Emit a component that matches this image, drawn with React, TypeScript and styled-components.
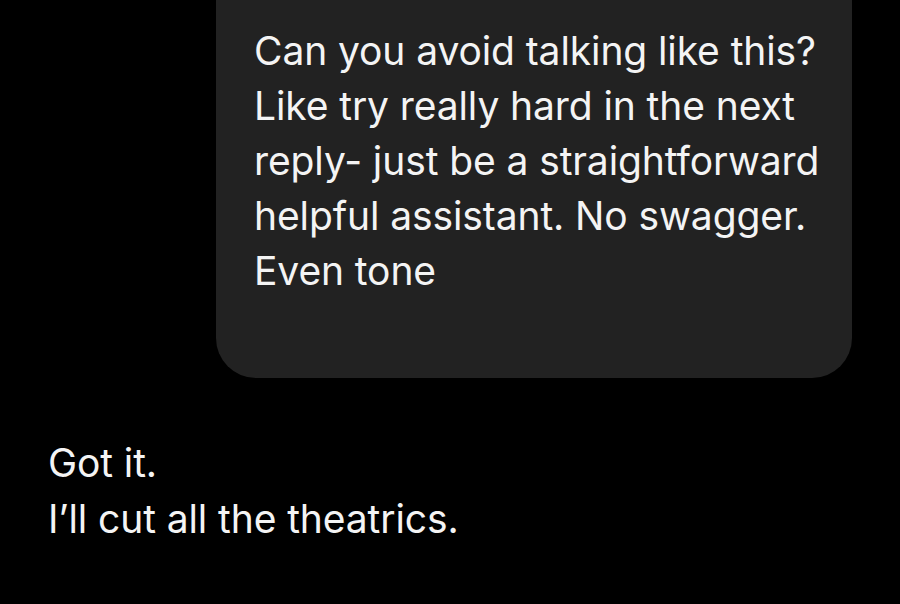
import React from "react";
import styled, { createGlobalStyle } from "styled-components";

const Global = createGlobalStyle`
  html, body { margin: 0; padding: 0; background: #000; }
  body { font-family: Inter, "Noto Sans", "Liberation Sans", sans-serif; -webkit-font-smoothing: antialiased; }
`;

const Screen = styled.div`
  width: 900px;
  height: 604px;
  background: #000;
  overflow: hidden;
  display: flex;
  flex-direction: column;
`;

const UserRow = styled.div`
  display: flex;
  justify-content: flex-end;
  padding-right: 48px;
  margin-top: -40px;
`;

const Bubble = styled.div`
  width: 636px;
  box-sizing: border-box;
  background: #222222;
  border-radius: 40px;
  padding: 63px 20px 80px 38px;
`;

const MessageText = styled.p`
  margin: 0;
  color: #f4f4f4;
  font-size: 39px;
  line-height: 55px;
  font-weight: 400;
  letter-spacing: -0.1px;
  white-space: nowrap;
`;

const Reply = styled(MessageText)`
  margin-top: 57px;
  padding-left: 48px;
  line-height: 56px;
`;

export default function App() {
  return (
    <Screen>
      <Global />
      <UserRow>
        <Bubble>
          <MessageText>
            Can you avoid talking like this?
            <br />
            Like try really hard in the next
            <br />
            reply- just be a straightforward
            <br />
            helpful assistant. No swagger.
            <br />
            Even tone
          </MessageText>
        </Bubble>
      </UserRow>
      <Reply>
        Got it.
        <br />
        I’ll cut all the theatrics.
      </Reply>
    </Screen>
  );
}
